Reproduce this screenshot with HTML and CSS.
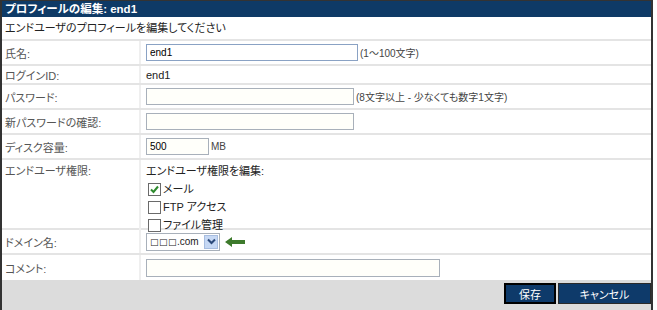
FILE: index.html
```html
<!DOCTYPE html>
<html lang="ja">
<head>
  <meta charset="UTF-8">
  <title>プロフィールの編集</title>
  <link rel="stylesheet" href="styles.css">
</head>
<body>

  <div class="panel">
    <h1 class="panel-title">プロフィールの編集: end1</h1>
    <p class="intro">エンドユーザのプロフィールを編集してください</p>

    <div class="row">
      <div class="label">氏名:</div>
      <div class="value">
        <input type="text" class="field field-name" value="end1">
        <span class="hint">(1～100文字)</span>
      </div>
    </div>

    <div class="row row-short">
      <div class="label">ログインID:</div>
      <div class="value">end1</div>
    </div>

    <div class="row">
      <div class="label">パスワード:</div>
      <div class="value">
        <input type="password" class="field field-pass">
        <span class="hint">(8文字以上 - 少なくても数字1文字)</span>
      </div>
    </div>

    <div class="row">
      <div class="label">新パスワードの確認:</div>
      <div class="value">
        <input type="password" class="field field-pass">
      </div>
    </div>

    <div class="row">
      <div class="label">ディスク容量:</div>
      <div class="value">
        <input type="text" class="field field-disk" value="500">
        <span class="hint">MB</span>
      </div>
    </div>

    <div class="row row-perms">
      <div class="label">エンドユーザ権限:</div>
      <div class="value perms">
        <div>エンドユーザ権限を編集:</div>
        <label class="check"><span class="box checked">
          <svg width="11" height="11" viewBox="0 0 11 11"><path d="M2 5.5 L4.5 8 L9 2.5" fill="none" stroke="#2e8b2e" stroke-width="2"/></svg>
        </span>メール</label>
        <label class="check"><span class="box"></span>FTP アクセス</label>
        <label class="check"><span class="box"></span>ファイル管理</label>
      </div>
    </div>

    <div class="row">
      <div class="label">ドメイン名:</div>
      <div class="value">
        <div class="select">
          <span class="select-text"><span class="sq">□□□</span>.com</span>
          <span class="select-btn">
            <svg width="9" height="7" viewBox="0 0 9 7"><path d="M1 1.5 L4.5 5 L8 1.5" fill="none" stroke="#2c4a7a" stroke-width="2"/></svg>
          </span>
        </div>
        <svg class="arrow" width="20" height="10" viewBox="0 0 20 10"><path d="M0 5 L7 0 L7 3 L20 3 L20 7 L7 7 L7 10 Z" fill="#3d7a2c"/></svg>
      </div>
    </div>

    <div class="row row-last">
      <div class="label">コメント:</div>
      <div class="value">
        <input type="text" class="field field-comment">
      </div>
    </div>

    <div class="footer">
      <button class="btn btn-default">保存</button>
      <button class="btn">キャンセル</button>
    </div>
  </div>

</body>
</html>
```

FILE: styles.css
```css
body {
  margin: 0;
  background: #fff;
  font-family: "Liberation Sans", "Noto Sans CJK JP", sans-serif;
  font-size: 11px;
  color: #222;
}
.panel {
  width: 649px;
  height: 309px;
  border-top: 1px solid #333;
  border-left: 2px solid #333;
  border-right: 2px solid #333;
  display: flex;
  flex-direction: column;
  font-feature-settings: "palt";
}
.panel-title {
  margin: 0;
  height: 16px;
  line-height: 16px;
  padding-left: 3px;
  background: #0e3a66;
  color: #fff;
  font-size: 11.5px;
  font-weight: bold;
}
.intro {
  margin: 0;
  height: 22px;
  line-height: 22px;
  padding-left: 3px;
  border-bottom: 2px solid #e4e4e4;
  font-size: 11px;
}
.row {
  display: grid;
  grid-template-columns: 139px 1fr;
  height: 23px;
  border-bottom: 2px solid #e4e4e4;
}
.row-short { height: 17px; }
.row-perms { height: 68px; }
.row-last { border-bottom: none; height: 25px; }
.label {
  padding-left: 3px;
  color: #555;
  border-right: 2px solid #efefef;
  display: flex;
  align-items: center;
}
.value {
  padding-left: 5px;
  display: flex;
  align-items: center;
}
.row-perms .label { align-items: flex-start; padding-top: 2px; }
.perms {
  flex-direction: column;
  align-items: flex-start;
  padding-top: 2px;
  line-height: 18px;
}
.field {
  box-sizing: border-box;
  height: 17px;
  border: 1px solid #a8b0ba;
  background: #fffffa;
  font: inherit;
  font-size: 10px;
  padding: 1px 3px;
  margin: 0;
}
.field-name { width: 212px; border-color: #8aa2c4; background: #fff; }
.field-pass { width: 208px; }
.field-disk { width: 63px; }
.field-comment { width: 294px; height: 18px; }
.hint {
  font-size: 10px;
  color: #444;
  margin-left: 2px;
}
.check {
  display: flex;
  align-items: center;
  padding-left: 2px;
}
.box {
  box-sizing: border-box;
  width: 13px;
  height: 13px;
  border: 1px solid #6a6a6a;
  background: #fff;
  margin-right: 2px;
  display: flex;
  align-items: center;
  justify-content: center;
}
.select {
  box-sizing: border-box;
  width: 74px;
  height: 18px;
  border: 1px solid #a8b0ba;
  display: flex;
  align-items: center;
  justify-content: space-between;
  padding: 1px;
}
.select-text {
  font-size: 10px;
  padding-left: 2px;
  font-feature-settings: normal;
}
.sq {
  font-family: "DejaVu Sans", sans-serif;
  font-size: 9px;
  letter-spacing: 0.5px;
}
.select-btn {
  width: 14px;
  height: 14px;
  background: #c6d8f4;
  border: 1px solid #a7bde0;
  box-sizing: border-box;
  display: flex;
  align-items: center;
  justify-content: center;
}
.arrow { margin-left: 5px; }
.footer {
  flex: 1;
  background: #dcdcdc;
  display: flex;
  justify-content: flex-end;
  align-items: flex-start;
  padding-top: 3px;
  gap: 2px;
}
.btn {
  height: 21px;
  background: #0e3a6a;
  color: #fff;
  border: 1px solid #2a2a2a;
  font: inherit;
  font-size: 11px;
  padding: 0;
  width: 93px;
  cursor: pointer;
}
.btn-default {
  width: 52px;
  border: 2px solid #000;
}
```
